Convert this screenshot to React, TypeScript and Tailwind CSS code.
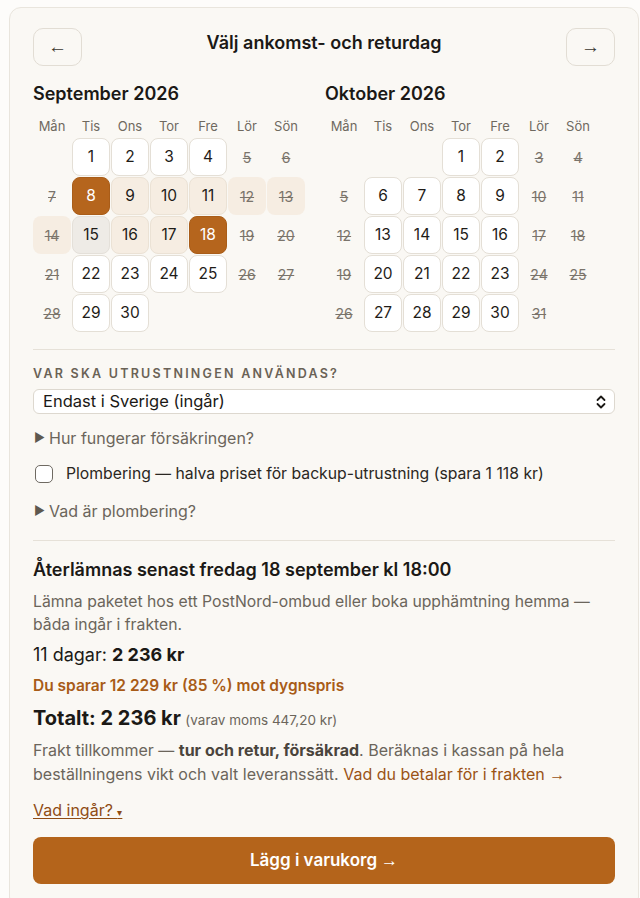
import React from "react";

type CellKind = "empty" | "open" | "closed" | "start" | "end" | "range" | "rangeClosed" | "today";

const WEEKDAYS = ["Mån", "Tis", "Ons", "Tor", "Fre", "Lör", "Sön"];

function buildMonth(offset: number, days: number, marks: Record<number, CellKind>) {
  const cells: { day: number | null; kind: CellKind }[] = [];
  for (let i = 0; i < offset; i++) cells.push({ day: null, kind: "empty" });
  for (let d = 1; d <= days; d++) {
    const col = (offset + d - 1) % 7;
    const closed = col === 0 || col === 5 || col === 6;
    const kind = marks[d] ?? (closed ? "closed" : "open");
    cells.push({ day: d, kind });
  }
  return cells;
}

const september = buildMonth(1, 30, {
  8: "start",
  9: "range",
  10: "range",
  11: "range",
  12: "rangeClosed",
  13: "rangeClosed",
  14: "rangeClosed",
  15: "today",
  16: "range",
  17: "range",
  18: "end",
});

const october = buildMonth(3, 31, {});

const arrowFont = { fontFamily: "'Liberation Sans', Arial, sans-serif" };

function DayCell({ day, kind }: { day: number | null; kind: CellKind }) {
  if (day === null) return <div className="h-[38px]" />;
  const base = "h-[38px] flex items-center justify-center rounded-lg";
  switch (kind) {
    case "open":
      return <div className={`${base} border border-[#e4dfd6] bg-white text-[15.5px] text-[#1f1c18]`}>{day}</div>;
    case "start":
    case "end":
      return <div className={`${base} border border-[#a95d19] bg-[#b5651d] text-[15.5px] text-white`}>{day}</div>;
    case "range":
      return <div className={`${base} border border-[#ebe2d5] bg-[#f6ede2] text-[15.5px] text-[#1f1c18]`}>{day}</div>;
    case "today":
      return <div className={`${base} border border-[#e4e0d9] bg-[#eeebe6] text-[15.5px] text-[#1f1c18]`}>{day}</div>;
    case "rangeClosed":
      return <div className={`${base} bg-[#f6ede2] text-[14px] text-[#7a746b] line-through`}>{day}</div>;
    default:
      return <div className={`${base} text-[14px] text-[#7a746b] line-through`}>{day}</div>;
  }
}

function Month({ title, cells }: { title: string; cells: { day: number | null; kind: CellKind }[] }) {
  return (
    <div>
      <h3 className="h-6 text-[18px] font-semibold leading-6 text-[#1b1916]">{title}</h3>
      <div className="mt-[10px] grid grid-cols-[repeat(7,38px)] gap-x-px">
        {WEEKDAYS.map((w) => (
          <div key={w} className="h-5 text-center text-[13px] leading-5 text-[#6f695f]">
            {w}
          </div>
        ))}
      </div>
      <div className="mt-[2px] grid grid-cols-[repeat(7,38px)] gap-px">
        {cells.map((c, i) => (
          <DayCell key={i} day={c.day} kind={c.kind} />
        ))}
      </div>
    </div>
  );
}

export default function App() {
  return (
    <div
      className="min-h-screen overflow-hidden bg-[#fdfcfa] pl-[9px] pt-[7px]"
      style={{ fontFamily: "Inter, 'Noto Sans', sans-serif" }}
    >
      <div className="w-[630px] rounded-xl border border-[#e9e5dd] bg-[#faf8f4] px-[23px] pb-6 pt-5">
        {/* Header with month navigation */}
        <div className="flex items-start justify-between">
          <button
            className="flex h-[38px] w-[49px] items-center justify-center rounded-[10px] border border-[#e2ddd4] bg-[#faf8f4] text-[19px] text-[#3a3630]"
            style={arrowFont}
          >
            ←
          </button>
          <h2 className="mt-[3px] text-[18px] font-semibold leading-6 text-[#1b1916]">Välj ankomst- och returdag</h2>
          <button
            className="flex h-[38px] w-[49px] items-center justify-center rounded-[10px] border border-[#e2ddd4] bg-[#faf8f4] text-[19px] text-[#3a3630]"
            style={arrowFont}
          >
            →
          </button>
        </div>

        {/* Two-month calendar */}
        <div className="mt-4 flex gap-5">
          <Month title="September 2026" cells={september} />
          <Month title="Oktober 2026" cells={october} />
        </div>

        <div className="mt-[17px] h-px bg-[#e6e1d8]" />

        {/* Usage region */}
        <div className="mt-4 text-[12.5px] font-semibold uppercase leading-4 tracking-[0.18em] text-[#6a6256]">
          Var ska utrustningen användas?
        </div>
        <div className="mt-[7px] flex h-[25px] items-center justify-between rounded-md border border-[#ddd8cf] bg-white pl-[9px] pr-[8px]">
          <span className="text-[16.5px] text-[#1b1916]">Endast i Sverige (ingår)</span>
          <svg width="10" height="14" viewBox="0 0 10 14" fill="none" stroke="#1b1916" strokeWidth="1.8" strokeLinecap="round" strokeLinejoin="round">
            <path d="M1.5 5 5 1.5 8.5 5" />
            <path d="M1.5 9 5 12.5 8.5 9" />
          </svg>
        </div>

        <div className="mt-[13px] flex h-[22px] items-center text-[16px] text-[#6b655b]">
          <span className="ml-[1px] mr-[4px] text-[12px] text-[#5e584f]">▶</span>
          Hur fungerar försäkringen?
        </div>

        <label className="mt-[14px] flex h-[22px] items-center text-[15.75px] text-[#2a2722]">
          <span className="ml-[2px] mr-[13px] h-[18px] w-[18px] rounded-[5px] border-[1.5px] border-[#6f6a62] bg-white" />
          Plombering — halva priset för backup-utrustning (spara 1 118 kr)
        </label>

        <div className="mt-[15px] flex h-[22px] items-center text-[16px] text-[#6b655b]">
          <span className="ml-[1px] mr-[4px] text-[12px] text-[#5e584f]">▶</span>
          Vad är plombering?
        </div>

        <div className="mt-[18px] h-px bg-[#e6e1d8]" />

        {/* Return and price summary */}
        <h3 className="mt-4 text-[18px] font-semibold leading-[26px] text-[#1b1916]">
          Återlämnas senast fredag 18 september kl 18:00
        </h3>
        <p className="mt-[7px] text-[15.75px] leading-[23px] text-[#6b655b]">
          Lämna paketet hos ett PostNord-ombud eller boka upphämtning hemma — båda ingår i frakten.
        </p>
        <div className="mt-[7px] text-[18px] leading-6 text-[#1b1916]">
          11 dagar: <span className="font-bold">2 236 kr</span>
        </div>
        <div className="mt-[9px] text-[15.5px] font-semibold leading-5 text-[#a85b17]">
          Du sparar 12 229 kr (85 %) mot dygnspris
        </div>
        <div className="mt-2 leading-7 text-[#1b1916]">
          <span className="text-[20px] font-bold">Totalt: 2 236 kr</span>{" "}
          <span className="text-[13.5px] text-[#6b655b]">(varav moms 447,20 kr)</span>
        </div>
        <p className="mt-[4px] text-[16px] leading-6 text-[#6b655b]">
          Frakt tillkommer — <span className="font-bold text-[#4a443c]">tur och retur, försäkrad</span>. Beräknas i
          kassan på hela beställningens vikt och valt leveranssätt.{" "}
          <span className="text-[#9a5316]">
            Vad du betalar för i frakten <span style={arrowFont}>→</span>
          </span>
        </p>
        <div className="mt-[12px] leading-[22px]">
          <span className="text-[16px] text-[#8f4c14] underline decoration-1 underline-offset-2">
            Vad ingår? <span className="text-[10px]">▾</span>
          </span>
        </div>

        <button className="mt-[14px] flex h-[47px] w-full items-center justify-center rounded-lg bg-[#b4641b] text-[17px] font-semibold text-white">
          Lägg i varukorg <span className="ml-1" style={arrowFont}>→</span>
        </button>
      </div>
    </div>
  );
}
